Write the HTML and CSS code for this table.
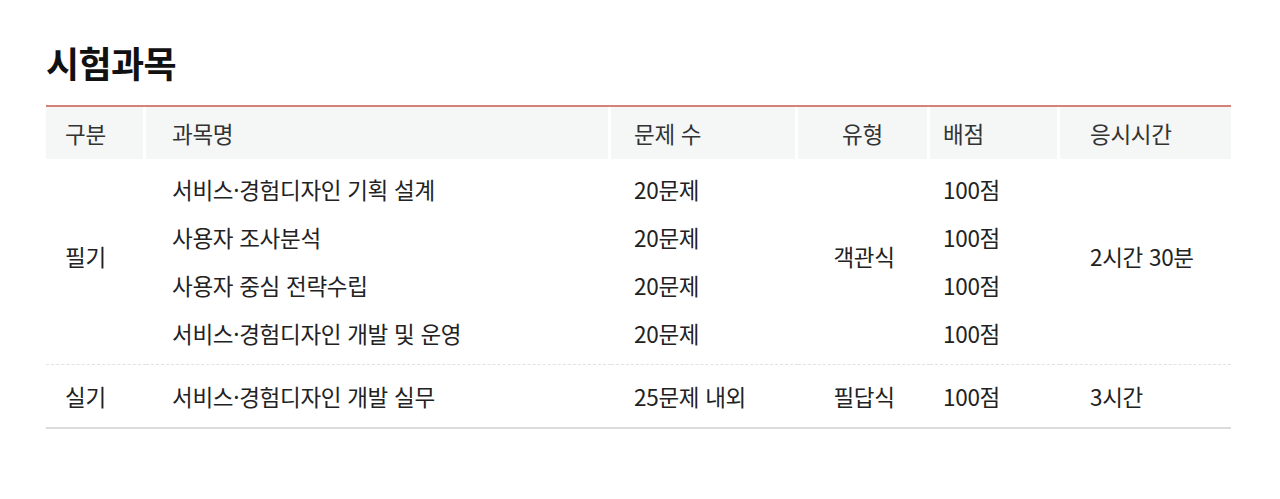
FILE: index.html
```html
<!DOCTYPE html>
<html lang="ko">
<head>
<meta charset="utf-8">
<title>시험과목</title>
<link rel="stylesheet" href="styles.css">
</head>
<body>
<section class="section">
  <h2 class="title">시험과목</h2>
  <div class="table-wrap">
    <table class="exam">
      <colgroup>
        <col class="c1"><col class="c2"><col class="c3"><col class="c4"><col class="c5"><col class="c6">
      </colgroup>
      <thead>
        <tr>
          <th class="p1">구분</th>
          <th class="p2">과목명</th>
          <th class="p3">문제 수</th>
          <th class="center">유형</th>
          <th class="p5">배점</th>
          <th class="p6">응시시간</th>
        </tr>
      </thead>
      <tbody>
        <tr class="top">
          <td class="p1 span" rowspan="4">필기</td>
          <td class="p2">서비스·경험디자인 기획 설계</td>
          <td class="p3">20문제</td>
          <td class="center span" rowspan="4">객관식</td>
          <td class="p5">100점</td>
          <td class="p6 span" rowspan="4">2시간 30분</td>
        </tr>
        <tr>
          <td class="p2">사용자 조사분석</td>
          <td class="p3">20문제</td>
          <td class="p5">100점</td>
        </tr>
        <tr>
          <td class="p2">사용자 중심 전략수립</td>
          <td class="p3">20문제</td>
          <td class="p5">100점</td>
        </tr>
        <tr class="bottom">
          <td class="p2">서비스·경험디자인 개발 및 운영</td>
          <td class="p3">20문제</td>
          <td class="p5">100점</td>
        </tr>
        <tr class="last">
          <td class="p1">실기</td>
          <td class="p2">서비스·경험디자인 개발 실무</td>
          <td class="p3">25문제 내외</td>
          <td class="center">필답식</td>
          <td class="p5">100점</td>
          <td class="p6">3시간</td>
        </tr>
      </tbody>
    </table>
  </div>
</section>
</body>
</html>
```

FILE: styles.css
```css
html, body {
  margin: 0;
  padding: 0;
  background: #ffffff;
}

body {
  font-family: "Noto Sans CJK KR", "Noto Sans", sans-serif;
  color: #222222;
}

.section {
  padding: 39px 0 0 46px;
  width: 1185px;
}

.title {
  margin: 0 0 20px 0;
  font-size: 36px;
  line-height: 46px;
  font-weight: 700;
  letter-spacing: -0.6px;
  color: #111111;
}

.table-wrap {
  border-top: 2px solid #d5817b;
  border-bottom: 2px solid #dcdcdc;
}

.exam {
  width: 1185px;
  border-collapse: separate;
  border-spacing: 0;
  table-layout: fixed;
}

.c1 { width: 100px; }
.c2 { width: 465px; }
.c3 { width: 187px; }
.c4 { width: 132px; }
.c5 { width: 130px; }
.c6 { width: 171px; }

.exam th,
.exam td {
  font-size: 22.5px;
  letter-spacing: -0.3px;
  text-align: left;
  padding: 0;
  white-space: nowrap;
}

.exam th {
  height: 52px;
  background: #f5f6f6;
  border-right: 3px solid #ffffff;
  font-weight: 400;
  color: #333333;
}

.exam th:last-child {
  border-right: 0;
}

.exam td {
  height: 48px;
  color: #222222;
  vertical-align: middle;
}

.exam .top td {
  padding-top: 6px;
}

.exam .top td.span {
  padding-top: 0;
  padding-bottom: 12px;
  border-bottom: 1px dashed #e2e2e2;
}

.exam .bottom td {
  padding-bottom: 7px;
  border-bottom: 1px dashed #e2e2e2;
}

.exam .last td {
  height: 62px;
}

.p1 { padding-left: 19px !important; }
.p2 { padding-left: 26px !important; }
.p3 { padding-left: 23px !important; }
.p5 { padding-left: 13px !important; }
.p6 { padding-left: 30px !important; }
.center { text-align: center !important; }
```
